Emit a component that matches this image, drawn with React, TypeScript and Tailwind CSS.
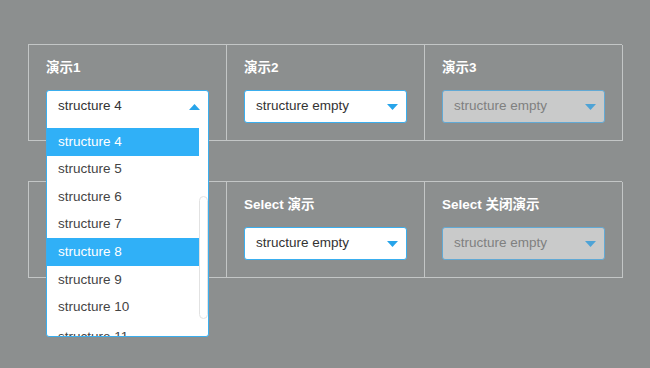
import React from 'react';

const font = { fontFamily: '"Liberation Sans", "Noto Sans CJK SC", Arial, sans-serif' };

const Caret: React.FC<{ up?: boolean; disabled?: boolean }> = ({ up, disabled }) => (
  <svg width="11" height="6" viewBox="0 0 11 6" className={disabled ? 'text-[#4ea3d6]' : 'text-[#27a4ea]'}>
    {up ? <path d="M0 6 L5.5 0 L11 6 Z" fill="currentColor" /> : <path d="M0 0 L11 0 L5.5 6 Z" fill="currentColor" />}
  </svg>
);

const Select: React.FC<{ value: string; disabled?: boolean }> = ({ value, disabled }) => (
  <div
    className={
      disabled
        ? 'w-[163px] h-[33px] rounded-[3px] border border-[#62a9d4] bg-[#c9caca] flex items-center justify-between pl-[11px] pr-[8px] text-[13.5px] text-[#7f8080]'
        : 'w-[163px] h-[33px] rounded-[3px] border border-[#3aaeee] bg-white flex items-center justify-between pl-[11px] pr-[8px] text-[13.5px] text-[#333]'
    }
  >
    <span>{value}</span>
    <Caret disabled={disabled} />
  </div>
);

const options = ['structure 4', 'structure 5', 'structure 6', 'structure 7', 'structure 8', 'structure 9', 'structure 10', 'structure 11'];
const selected = ['structure 4', 'structure 8'];

// opened dropdown, drawn over the cell below it
const OpenSelect: React.FC = () => (
  <div className="relative w-[163px] h-[33px]">
    <div className="absolute left-0 top-0 z-10 w-[163px] h-[247px] rounded-[3px] border border-[#3aaeee] bg-white overflow-hidden">
      <div className="h-[31px] flex items-center justify-between pl-[11px] pr-[8px] text-[13.5px] text-[#333]">
        <span>structure 4</span>
        <Caret up />
      </div>
      <div className="mt-[6px] flex">
        <div className="w-[152px]">
          {options.map((o, i) => (
            <div
              key={o}
              className={
                selected.includes(o)
                  ? 'h-[27.6px] flex items-center pl-[11px] text-[13.5px] bg-[#30b0f7] text-white'
                  : i === options.length - 1
                  ? 'h-[27.6px] flex items-center pl-[11px] pt-[5px] text-[13.5px] text-[#444]'
                  : 'h-[27.6px] flex items-center pl-[11px] text-[13.5px] text-[#444]'
              }
            >
              {o}
            </div>
          ))}
        </div>
        <div className="w-[9px] pt-[68px]">
          <div className="h-[123px] border border-[#e2e2e2] rounded-[5px]" />
        </div>
      </div>
    </div>
  </div>
);

const Cell: React.FC<{ label?: string; children?: React.ReactNode }> = ({ label, children }) => (
  <div className="border-r border-b border-[#c3c6c6] pt-[13px] pl-[17px] pb-[17px]">
    <div className="h-[20px] leading-[20px] text-[13.5px] font-bold text-white mb-3">{label}</div>
    {children ?? <div className="h-[33px]" />}
  </div>
);

export default function App() {
  return (
    <div className="min-h-screen w-[650px] h-[368px] overflow-hidden bg-[#8c8f8f] pt-[44px] pl-[28px]" style={font}>
      <div className="w-[594px] grid grid-cols-[198px_198px_198px] border-t border-l border-[#c3c6c6]">
        <Cell label="演示1">
          <OpenSelect />
        </Cell>
        <Cell label="演示2">
          <Select value="structure empty" />
        </Cell>
        <Cell label="演示3">
          <Select value="structure empty" disabled />
        </Cell>
      </div>
      <div className="mt-10 w-[594px] grid grid-cols-[198px_198px_198px] border-t border-l border-[#c3c6c6]">
        <Cell />
        <Cell label="Select 演示">
          <Select value="structure empty" />
        </Cell>
        <Cell label="Select 关闭演示">
          <Select value="structure empty" disabled />
        </Cell>
      </div>
    </div>
  );
}
